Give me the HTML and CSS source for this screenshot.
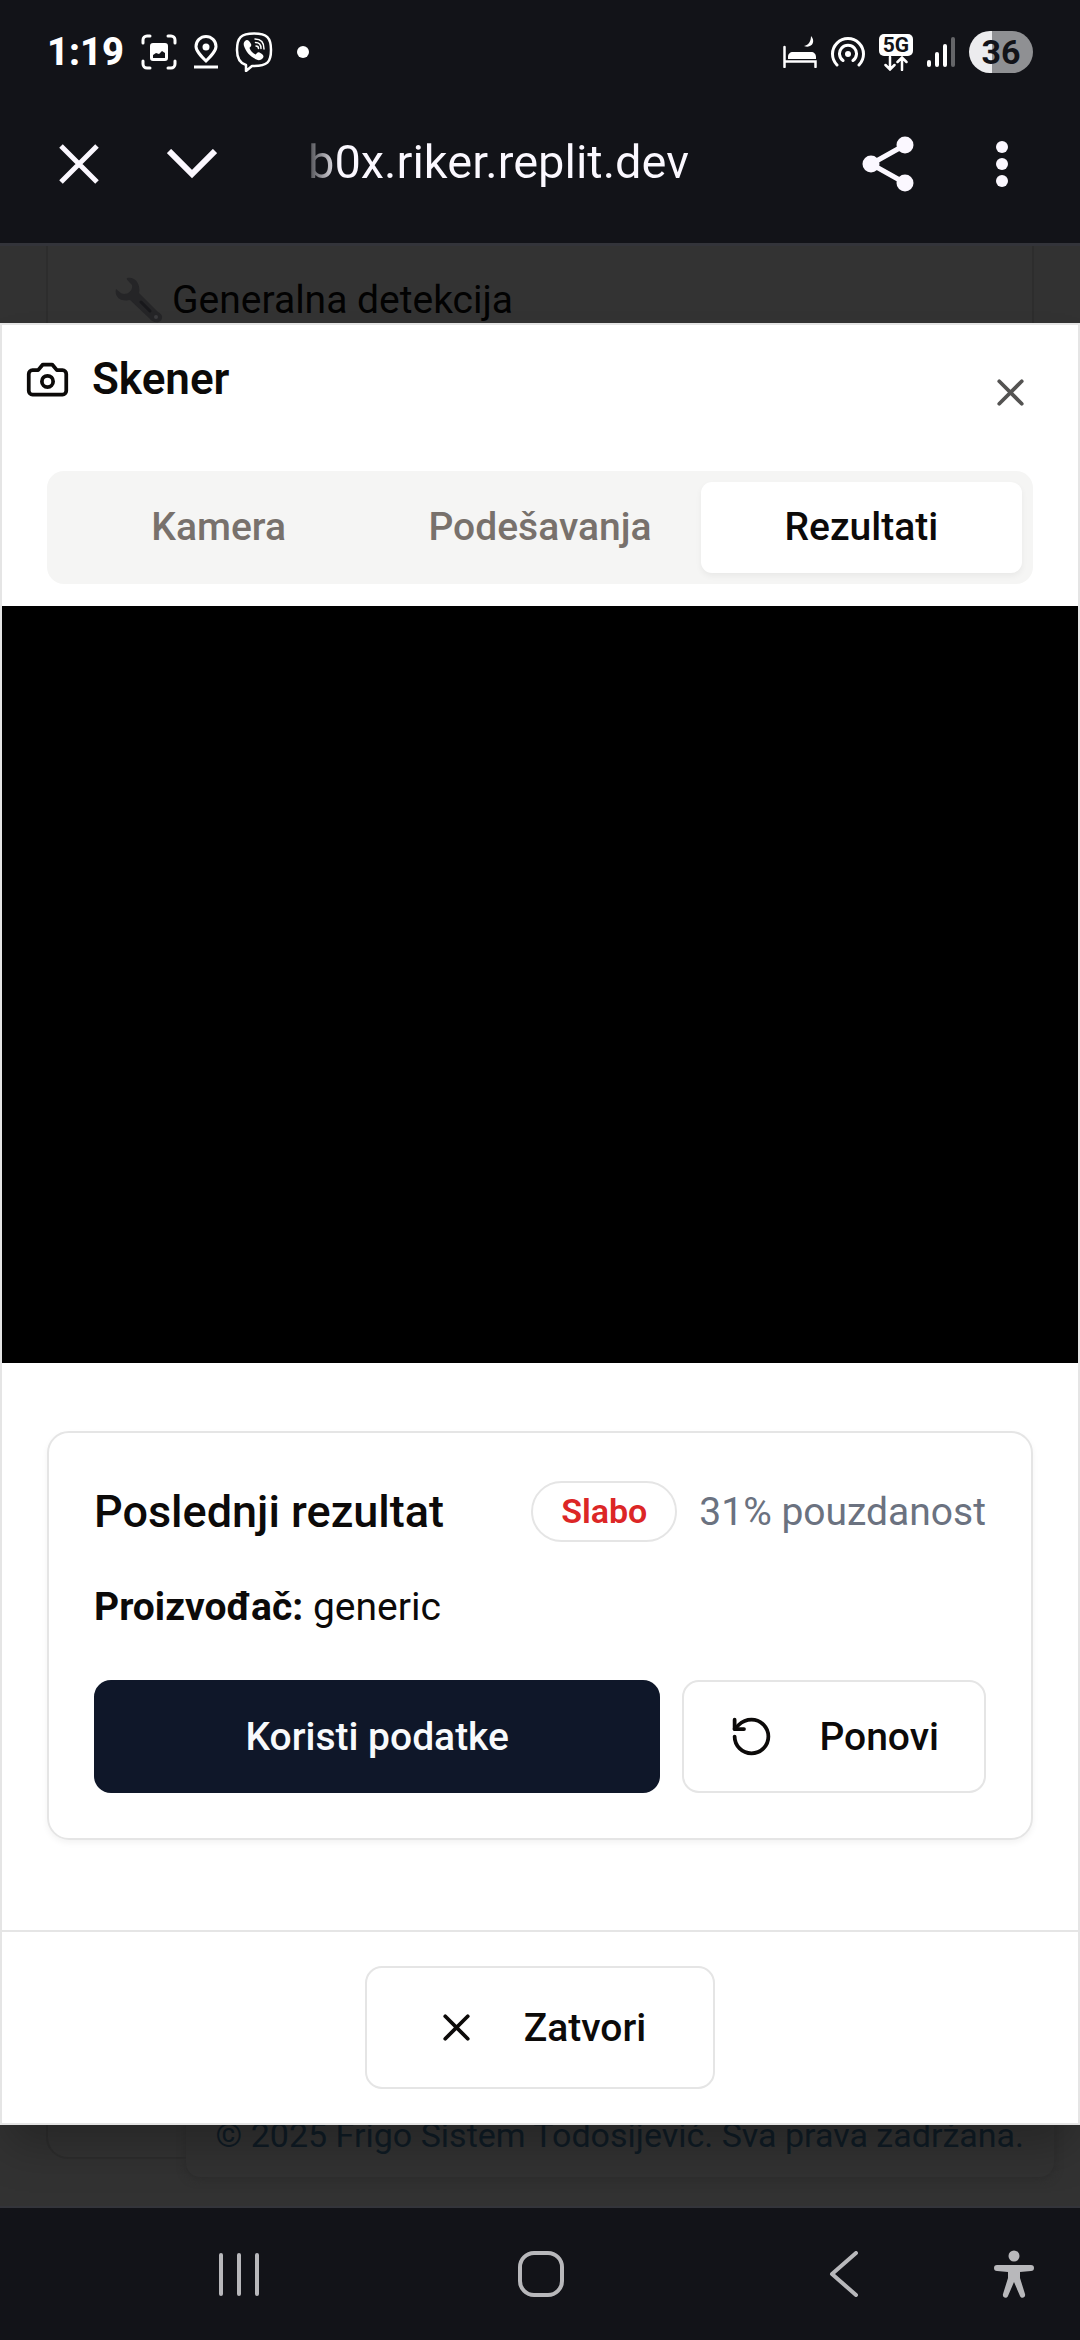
FILE: index.html
```html
<!DOCTYPE html>
<html lang="sr-Latn">
<head>
<meta charset="utf-8">
<meta name="viewport" content="width=device-width, initial-scale=1">
<title>Skener</title>
<link rel="stylesheet" href="styles.css">
</head>
<body>
<div class="screen">
  <header class="top">
    <div class="status">
      <div class="status-group status-left">
        <span class="clock">1:19</span>
        <svg width="36" height="36" viewBox="0 0 36 36" fill="none" stroke="#fff" stroke-width="3" stroke-linecap="round"><path d="M2 9V6a4 4 0 0 1 4-4h3M27 2h3a4 4 0 0 1 4 4v3M34 27v3a4 4 0 0 1-4 4h-3M9 34H6a4 4 0 0 1-4-4v-3"/><path stroke="none" fill="#fff" fill-rule="evenodd" d="M12 9h12a3 3 0 0 1 3 3v12a3 3 0 0 1-3 3H12a3 3 0 0 1-3-3V12a3 3 0 0 1 3-3zM12 21v3h12v-5l-3-2-3 3-3-1z"/></svg>
        <svg width="24" height="34" viewBox="0 0 24 34" fill="none" stroke="#fff" stroke-width="3"><path d="M12 26C7 21 2 16 2 11.500a10 10 0 0 1 20 0C22 16 17 21 12 26z"/><circle cx="12" cy="12" r="3.500" fill="#fff" stroke="none"/><path d="M0 32h24"/></svg>
        <svg width="38" height="40" viewBox="0 0 38 40" fill="none" stroke="#fff" stroke-width="2.500" stroke-linejoin="round"><path d="M19 1.500c13 0 17 4 17 16.500S32 34 19 34l-2 0-6 5v-6C4 31 2 26 2 18 2 5.500 6 1.500 19 1.500z"/><path fill="#fff" stroke="none" d="M10 9c2-2 4-1 6 3 1 2-1 3-1.500 4 1 3 3 5 6 6.500 1-.5 2-3 4-2 4 2 5 4 3 6-2 2-4 2-6 1C15 24.500 11 20 9 14c-.5-2-.5-3.500 1-5z"/><path stroke-width="1.500" stroke-linecap="round" d="M20 7c6 0 9 4 9 10M20.500 10.500c4 0 5.500 3 5.500 6M21 14c1.500 0 2.500 1 2.500 2.500"/></svg>
        <svg class="ic-more" width="12" height="12" viewBox="0 0 12 12"><circle cx="6" cy="6" r="6" fill="#fff"/></svg>
      </div>
      <div class="status-group status-right">
        <svg width="34" height="32" viewBox="0 0 34 32" fill="none" stroke="#fff" stroke-width="2.500" stroke-linecap="round"><path d="M1.500 11v20M1.500 25.500h31V31"/><path fill="#fff" stroke="none" d="M5 23v-2c0-3 2-5 5-5h18c3 0 5 2 5 5v2zM28 0c5 5 1 13-7 10 5-1 7-5 7-10z"/></svg>
        <svg width="34" height="32" viewBox="0 0 34 32" fill="none" stroke="#fff" stroke-width="3" stroke-linecap="round"><circle cx="17" cy="18" r="3" fill="#fff" stroke="none"/><path d="M12 24.500a8.500 8.500 0 1 1 10 0M6 29a15.500 15.500 0 1 1 22 0"/></svg>
        <div class="network">
          <span class="network-label">5G</span>
          <svg width="24" height="15" viewBox="0 0 24 15" fill="none" stroke="#fff" stroke-width="2.500" stroke-linecap="round"><path d="M6 1v12M1.500 9l4.500 4.500L10.500 9M18 14V2M13.500 6L18 1.500 22.500 6"/></svg>
        </div>
        <svg width="28" height="30" viewBox="0 0 28 30" fill="#fff"><rect y="23" width="4" height="7" rx="2"/><rect x="8" y="15" width="4" height="15" rx="2"/><rect x="16" y="7" width="4" height="23" rx="2"/><rect x="24" width="4" height="30" rx="2" opacity=".35"/></svg>
        <span class="battery">36</span>
      </div>
    </div>
    <div class="toolbar">
      <button class="bare" aria-label="Close tab"><svg width="40" height="40" viewBox="0 0 40 40" stroke="#fbf8ff" stroke-width="5"><path d="M2 2l36 36M38 2L2 38"/></svg></button>
      <button class="bare chevron" aria-label="Minimize"><svg width="50" height="30" viewBox="0 0 50 30" fill="none" stroke="#fbf8ff" stroke-width="6"><path d="M2 2l23 23L48 2"/></svg></button>
      <div class="url"><span>b0x.riker.replit.dev</span></div>
      <button class="bare" aria-label="Share"><svg width="52" height="56" viewBox="0 0 52 56" fill="#fbf8ff" stroke="#fbf8ff"><path d="M43 9L9 28l34 19" fill="none" stroke-width="5"/><g stroke="none"><circle cx="43" cy="9" r="8.500"/><circle cx="9" cy="28" r="8.500"/><circle cx="43" cy="47" r="8.500"/></g></svg></button>
      <button class="bare menu" aria-label="Menu"><svg width="12" height="46" viewBox="0 0 12 46" fill="#fbf8ff"><circle cx="6" cy="6" r="6"/><circle cx="6" cy="23" r="6"/><circle cx="6" cy="40" r="6"/></svg></button>
    </div>
  </header>

  <main class="viewport">
    <div class="page">
      <div class="page-card">
        <p class="mode"><svg width="48" height="46" viewBox="0 0 48 46"><path d="M12 1c-1 2 3 4 5 7 1 5-3 9-8 9-3 0-5-3-8-5-2 8 5 13 14 11l19 18c5 7 14 5 13-2-1-2-2-3-4-4L24 16C26 7 20-1 12 1z" fill="#252527"/><path d="M26 25l9 9" stroke="#18181b" stroke-width="3" stroke-linecap="round"/><circle cx="41" cy="40" r="2" fill="#3c3c3e"/></svg>Generalna detekcija</p>
      </div>
      <footer class="copyright">© 2025 Frigo Sistem Todosijević. Sva prava zadržana.</footer>
    </div>

    <section class="dialog" role="dialog" aria-labelledby="dialog-title">
      <div class="dialog-head">
        <h1 class="dialog-title" id="dialog-title"><svg class="icon" viewBox="0 0 24 24"><path d="M14.500 4h-5L7 7H4a2 2 0 0 0-2 2v9a2 2 0 0 0 2 2h16a2 2 0 0 0 2-2V9a2 2 0 0 0-2-2h-3l-2.500-3z"/><circle cx="12" cy="13" r="3"/></svg>Skener</h1>
        <button class="bare dismiss" aria-label="Close"><svg class="icon" viewBox="0 0 24 24"><path d="M18 6L6 18M6 6l12 12"/></svg></button>
      </div>
      <div class="tabs" role="tablist">
        <button class="tab" role="tab">Kamera</button>
        <button class="tab" role="tab">Podešavanja</button>
        <button class="tab active" role="tab" aria-selected="true">Rezultati</button>
      </div>
      <div class="camera"></div>
      <div class="results">
        <article class="card">
          <div class="card-head">
            <h2 class="card-title">Poslednji rezultat</h2>
            <div class="score"><span class="badge">Slabo</span><span class="confidence">31% pouzdanost</span></div>
          </div>
          <p class="field"><strong>Proizvođač:</strong> generic</p>
          <div class="actions">
            <button class="btn primary">Koristi podatke</button>
            <button class="btn"><svg class="icon" viewBox="0 0 24 24"><path d="M3 12a9 9 0 1 0 9-9 9.750 9.750 0 0 0-6.740 2.740L3 8"/><path d="M3 3v5h5"/></svg>Ponovi</button>
          </div>
        </article>
      </div>
      <div class="dialog-foot">
        <button class="btn large"><svg class="icon" viewBox="0 0 24 24"><path d="M18 6L6 18M6 6l12 12"/></svg>Zatvori</button>
      </div>
    </section>
  </main>

  <nav class="navbar">
    <button class="bare" aria-label="Recents"><svg width="40" height="46" viewBox="0 0 40 46" stroke="#b8b8bb" stroke-width="4" stroke-linecap="round"><path d="M2 4v39M20 4v39M38 4v39"/></svg></button>
    <button class="bare" aria-label="Home"><svg width="46" height="46" viewBox="0 0 46 46" fill="none" stroke="#b8b8bb" stroke-width="4"><rect x="2" y="2" width="42" height="42" rx="14"/></svg></button>
    <button class="bare" aria-label="Back"><svg width="30" height="46" viewBox="0 0 30 46" fill="none" stroke="#b8b8bb" stroke-width="4" stroke-linecap="round" stroke-linejoin="round"><path d="M27 2L3 23l24 21"/></svg></button>
    <button class="bare access" aria-label="Accessibility"><svg width="40" height="48" viewBox="0 0 40 48" fill="#b8b8bb"><circle cx="20" cy="6" r="5.500"/><path d="M3 15h34a3 3 0 0 1 0 6l-11 1v6l5 16c1 4-4 5-5 2l-6-14-6 14c-1 3-6 2-5-2l5-16v-6L3 21a3 3 0 0 1 0-6z"/></svg></button>
  </nav>
</div>
</body>
</html>
```
FILE: styles.css
```css
* { box-sizing: border-box; }

body {
  margin: 0;
  background: #121318;
  color: #0c0a09;
  font-family: Roboto, "Liberation Sans", sans-serif;
  font-size: 39px;
  line-height: 56px;
}

h1, h2, p { margin: 0; }
svg { display: block; flex: none; }
button { font: inherit; color: inherit; cursor: pointer; }

.bare { padding: 0; border: 0; background: none; }

.screen {
  display: flex;
  flex-direction: column;
  min-height: 100vh;
}

/* Browser chrome */
.top { border-bottom: 3px solid #33343a; }

.status {
  display: flex;
  justify-content: space-between;
  align-items: center;
  height: 104px;
  padding: 0 47px;
}

.status-group { display: flex; align-items: center; }
.status-left { gap: 17px; }
.status-right { gap: 14px; }
.ic-more { margin-left: 7px; }

.clock {
  color: #fff;
  font-size: 38px;
  font-weight: 800;
}

.network { display: flex; flex-direction: column; align-items: center; }

.network-label {
  width: 34px;
  border-radius: 5px;
  background: #fff;
  color: #121318;
  font-size: 21px;
  font-weight: 700;
  line-height: 22px;
  text-align: center;
}

.battery {
  width: 64px;
  border-radius: 22px;
  background: linear-gradient(to right, #ececee 23px, #8f9093 23px);
  color: #121318;
  font-size: 34px;
  font-weight: 700;
  line-height: 42px;
  text-align: center;
}

.toolbar {
  display: flex;
  align-items: center;
  height: 139px;
  padding: 0 72px 19px 59px;
}

.chevron { margin-left: 68px; }
.menu { margin-left: 82px; }

.url {
  flex: 1;
  padding: 0 0 4px 91px;
  font-size: 47px;
}

.url span {
  background: linear-gradient(to right, #4a4b50, #fbf8ff 32px);
  background-clip: text;
  color: transparent;
}

/* Dimmed page behind the dialog */
.viewport {
  display: grid;
  flex: 1;
  border-bottom: 2px solid #33343a;
  background: #323232;
}

.viewport > * { grid-area: 1 / 1; }

.page {
  display: flex;
  flex-direction: column;
  padding: 0 26px 29px 46px;
}

.page-card {
  flex: 1;
  margin: 0 20px -54px 0;
  padding: 26px 67px;
  border: 2px solid #2d2d2d;
  border-top: 0;
  border-radius: 0 0 22px 22px;
  background: #333;
}

.mode {
  display: flex;
  align-items: center;
  gap: 9px;
  color: #020202;
}

.copyright {
  align-self: flex-end;
  padding: 8px 30px 19px;
  border-radius: 0 0 14px 14px;
  background: #323232;
  box-shadow: 0 2px 8px #2c2c2c;
  color: #0f1b24;
  font-size: 34px;
  line-height: 45px;
}

/* Dialog */
.dialog {
  display: flex;
  flex-direction: column;
  margin: 77px 0 81px;
  border: 2px solid #e5e5e5;
  background: #fff;
  box-shadow: 0 28px 42px -8px rgba(0, 0, 0, .25);
}

.dialog-head {
  display: flex;
  justify-content: space-between;
  align-items: flex-start;
  padding: 26px 45px 34px 23px;
}

.dialog-title {
  display: flex;
  align-items: center;
  gap: 22px;
  font-size: 44px;
  font-weight: 600;
  line-height: 56px;
}

.dismiss { padding-top: 19px; color: #545352; }

.icon {
  width: 45px;
  height: 45px;
  fill: none;
  stroke: currentColor;
  stroke-width: 2;
  stroke-linecap: round;
  stroke-linejoin: round;
}

.tabs {
  display: grid;
  grid-template-columns: repeat(3, 1fr);
  margin: 22px 45px;
  padding: 11px;
  border-radius: 17px;
  background: #f5f5f4;
}

.tab {
  padding: 17px 0 18px;
  border: 0;
  border-radius: 11px;
  background: none;
  color: #78716c;
  font-weight: 500;
}

.tab.active {
  background: #fff;
  box-shadow: 0 3px 6px rgba(0, 0, 0, .05);
  color: #0c0a09;
}

.camera { flex: 1; background: #000; }

.results { padding: 68px 45px 90px; }

.card {
  padding: 45px;
  border: 2px solid #e5e5e5;
  border-radius: 22px;
  box-shadow: 0 3px 6px rgba(0, 0, 0, .05);
}

.card-head {
  display: flex;
  justify-content: space-between;
  align-items: center;
  margin-bottom: 34px;
}

.card-title { font-size: 45px; font-weight: 500; line-height: 67px; }

.score { display: flex; align-items: center; gap: 22px; }

.badge {
  padding: 6px 28px;
  border: 2px solid #e5e5e5;
  border-radius: 31px;
  color: #dc2626;
  font-size: 34px;
  font-weight: 600;
  line-height: 45px;
}

.confidence { color: #6b7280; }

.field { margin-bottom: 45px; }
.field strong { font-weight: 700; }

.actions { display: flex; gap: 22px; }

.btn {
  display: flex;
  align-items: center;
  justify-content: center;
  gap: 45px;
  height: 113px;
  padding: 0 45px;
  border: 2px solid #e5e5e5;
  border-radius: 17px;
  background: #fff;
  font-weight: 500;
}

.btn.primary {
  flex: 1;
  border-color: #0f1729;
  background: #0f1729;
  color: #f8fafc;
}

.btn.large { height: 123px; padding: 0 67px; }

.dialog-foot {
  display: flex;
  justify-content: center;
  padding: 34px;
  border-top: 2px solid #e5e5e5;
}

/* System navigation */
.navbar {
  position: relative;
  display: grid;
  grid-template-columns: repeat(3, 1fr);
  align-items: center;
  justify-items: center;
  height: 132px;
  padding: 0 85px 0 88px;
}

.access { position: absolute; right: 46px; }
```
